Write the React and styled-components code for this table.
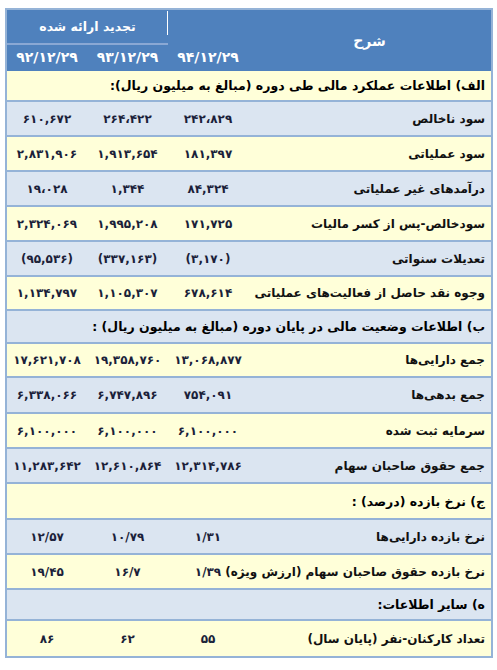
import React from 'react';
import styled, { createGlobalStyle } from 'styled-components';

const BLUE = '#4f81bd';
const LIGHT = '#dbe5f1';
const YELLOW = '#ffffd9';
const LINE = '#95b3d7';

const Global = createGlobalStyle`
  html, body { margin: 0; padding: 0; background: #fff; }
  body { font-family: "DejaVu Sans", "Noto Sans", sans-serif; }
`;

const Page = styled.div`
  padding: 8px 4px 0 5px;
`;

const Table = styled.div`
  width: 488px;
  box-sizing: border-box;
  border: 2px solid ${LINE};
  direction: rtl;
`;

const COLS = '243px 80px 81px 80px';

const Head = styled.div`
  display: grid;
  grid-template-columns: ${COLS};
  grid-template-rows: 35px 26px;
  background: ${BLUE};
  color: #fff;
  font-weight: bold;
`;

const HeadTitle = styled.div`
  grid-row: 1 / 3;
  grid-column: 1;
  display: flex;
  align-items: center;
  justify-content: center;
  font-size: 14px;
`;

const HeadGroup = styled.div`
  grid-row: 1;
  grid-column: 3 / 5;
  position: relative;
  display: flex;
  align-items: center;
  justify-content: center;
  font-size: 12.5px;
  border-bottom: 2px solid #8aa8d4;
  &::before {
    content: '';
    position: absolute;
    right: 0;
    top: 1px;
    height: 24px;
    width: 1px;
    background: #fff;
  }
`;

const HeadDate = styled.div`
  grid-row: 2;
  grid-column: ${(p) => p.$col};
  display: flex;
  align-items: center;
  justify-content: center;
  direction: ltr;
  font-size: 14px;
  letter-spacing: 1.2px;
  padding-bottom: 2px;
`;

const Row = styled.div`
  display: grid;
  grid-template-columns: ${COLS};
  height: ${(p) => p.$h || 35}px;
  box-sizing: border-box;
  background: ${(p) => (p.$alt ? LIGHT : YELLOW)};
  &:not(:last-child) {
    border-bottom: 2px solid ${LINE};
  }
`;

const Section = styled.div`
  grid-column: 1 / 5;
  display: flex;
  align-items: center;
  padding-right: 6px;
  font-size: 12.5px;
  font-weight: bold;
  color: #000;
`;

const Label = styled.div`
  display: flex;
  align-items: center;
  padding-right: 6px;
  font-size: 12px;
  font-weight: bold;
  color: #111;
  white-space: nowrap;
`;

const Num = styled.div`
  display: flex;
  align-items: center;
  justify-content: center;
  direction: ltr;
  font-size: 12px;
  font-weight: bold;
  color: #1b1f3a;
  white-space: nowrap;
`;

const data = [
  { section: 'الف) اطلاعات عملکرد مالی طی دوره (مبالغ به میلیون ریال):', h: 31 },
  { label: 'سود ناخالص', v: ['۲۴۲،۸۲۹', '۲۶۴،۴۲۲', '۶۱۰,۶۷۲'] },
  { label: 'سود عملیاتی', v: ['۱۸۱,۳۹۷', '۱,۹۱۳,۶۵۴', '۲,۸۳۱,۹۰۶'] },
  { label: 'درآمدهای غیر عملیاتی', v: ['۸۴,۳۲۴', '۱,۳۴۴', '۱۹،۰۲۸'] },
  { label: 'سودخالص-پس از کسر مالیات', v: ['۱۷۱,۷۲۵', '۱,۹۹۵,۲۰۸', '۲,۳۲۴,۰۶۹'] },
  { label: 'تعدیلات سنواتی', v: ['(۳,۱۷۰)', '(۳۳۷,۱۶۳)', '(۹۵,۵۳۶)'] },
  { label: 'وجوه نقد حاصل از فعالیت‌های عملیاتی', v: ['۶۷۸,۶۱۴', '۱,۱۰۵,۳۰۷', '۱,۱۳۴,۷۹۷'], h: 34 },
  { section: 'ب) اطلاعات وضعیت مالی در پایان دوره (مبالغ به میلیون ریال) :', h: 33 },
  { label: 'جمع دارایی‌ها', v: ['۱۳,۰۶۸,۸۷۷', '۱۹,۳۵۸,۷۶۰', '۱۷,۶۲۱,۷۰۸'], h: 34 },
  { label: 'جمع بدهی‌ها', v: ['۷۵۴,۰۹۱', '۶,۷۴۷,۸۹۶', '۶,۳۳۸,۰۶۶'], h: 36 },
  { label: 'سرمایه ثبت شده', v: ['۶,۱۰۰,۰۰۰', '۶,۱۰۰,۰۰۰', '۶,۱۰۰,۰۰۰'] },
  { label: 'جمع حقوق صاحبان سهام', v: ['۱۲,۳۱۴,۷۸۶', '۱۲,۶۱۰,۸۶۴', '۱۱,۲۸۳,۶۴۲'] },
  { section: 'ج) نرخ بازده (درصد) :', h: 36 },
  { label: 'نرخ بازده دارایی‌ها', v: ['۱/۳۱', '۱۰/۷۹', '۱۲/۵۷'] },
  { label: 'نرخ بازده حقوق صاحبان سهام (ارزش ویژه)', v: ['۱/۳۹', '۱۶/۷', '۱۹/۴۵'] },
  { section: 'ه) سایر اطلاعات:', h: 31 },
  { label: 'تعداد کارکنان-نفر (پایان سال)', v: ['۵۵', '۶۲', '۸۶'] },
];

export default function App() {
  return (
    <Page>
      <Global />
      <Table>
        <Head>
          <HeadTitle>شرح</HeadTitle>
          <HeadGroup>تجدید ارائه شده</HeadGroup>
          <HeadDate $col={2}>۹۴/۱۲/۲۹</HeadDate>
          <HeadDate $col={3}>۹۳/۱۲/۲۹</HeadDate>
          <HeadDate $col={4}>۹۲/۱۲/۲۹</HeadDate>
        </Head>
        {data.map((r, i) => (
          <Row key={i} $alt={i % 2 === 1} $h={r.h}>
            {r.section ? (
              <Section>{r.section}</Section>
            ) : (
              <>
                <Label>{r.label}</Label>
                {r.v.map((n, j) => (
                  <Num key={j}>{n}</Num>
                ))}
              </>
            )}
          </Row>
        ))}
      </Table>
    </Page>
  );
}
